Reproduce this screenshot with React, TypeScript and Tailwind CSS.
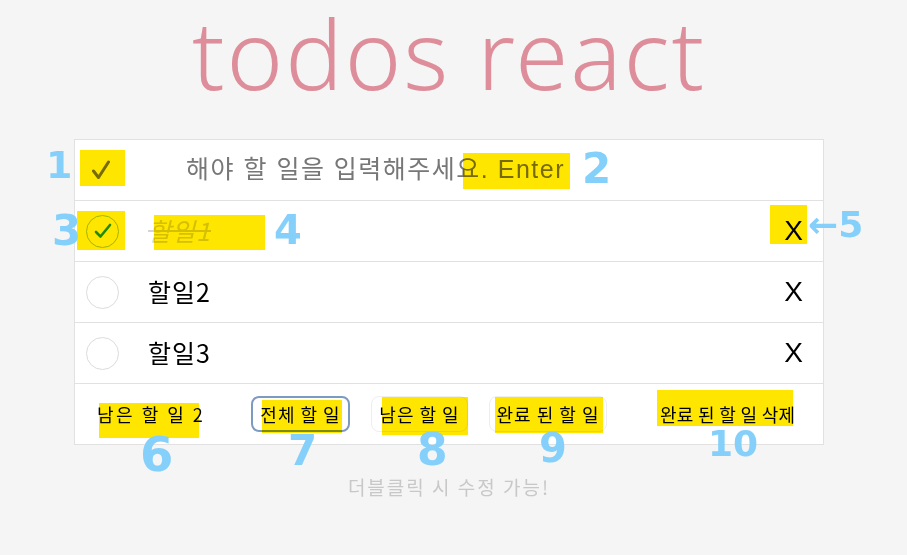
import React from 'react';

const kr = { fontFamily: '"Noto Sans CJK KR", "Liberation Sans", sans-serif' };
const krLatin = { fontFamily: '"Liberation Sans", "Noto Sans CJK KR", sans-serif' };

type Todo = { id: number; text: string; done: boolean };

const todos: Todo[] = [
  { id: 1, text: '할일1', done: true },
  { id: 2, text: '할일2', done: false },
  { id: 3, text: '할일3', done: false },
];

const TodoRow: React.FC<{ todo: Todo }> = ({ todo }) => (
  <li className="flex h-[61px] items-center border-t border-[#e1e1e1] pl-[11px] pr-[20px]">
    <span
      className={`flex h-[33px] w-[33px] items-center justify-center rounded-full border ${
        todo.done ? 'border-[#9fc9c1]' : 'border-[#dcdcdc]'
      }`}
    >
      {todo.done && (
        <svg width="18" height="16" viewBox="0 0 18 16">
          <path d="M2 9 L6.5 13.5 L16 2" fill="none" stroke="#1f9a3a" strokeWidth="2.6" strokeLinecap="round" strokeLinejoin="round" />
        </svg>
      )}
    </span>
    <span
      className={`ml-[29px] flex-1 text-[25px] tracking-[1px] ${todo.done ? 'text-[#d4d4d4] line-through italic' : 'text-black'}`}
      style={kr}
    >
      {todo.text}
    </span>
    <button className="text-[28px] leading-none text-black" style={{ fontFamily: '"Liberation Sans", sans-serif' }}>
      X
    </button>
  </li>
);

const Hl: React.FC<{ c: string }> = ({ c }) => (
  <div className={`pointer-events-none absolute bg-[#ffe600] mix-blend-multiply ${c}`} />
);

const Num: React.FC<{ c: string; t: string }> = ({ c, t }) => (
  <div
    className={`pointer-events-none absolute font-bold leading-none text-[#84d0fb] ${c}`}
    style={{ fontFamily: '"DejaVu Sans", sans-serif' }}
  >
    {t}
  </div>
);

export default function App() {
  return (
    <div className="relative min-h-[555px] w-[907px] overflow-hidden bg-[#f5f5f5]">
      <div className="flex w-[898px] flex-col items-center">
        <h1
          className="h-[139px] text-[96px] font-[350] leading-[106px] tracking-[2px] text-[#dd8e9a]"
          style={{ fontFamily: '"Noto Sans", "Open Sans", sans-serif' }}
        >
          todos react
        </h1>
        <section className="w-[750px] border border-[#e1e1e1] bg-white">
          <div className="flex h-[60px] items-center">
            <span className="flex w-[60px] pl-[17px]">
              <svg width="18" height="20" viewBox="0 0 18 20">
                <path d="M1.5 11 L6.5 17.5 L16.5 2" fill="none" stroke="#767676" strokeWidth="3" strokeLinecap="round" strokeLinejoin="round" />
              </svg>
            </span>
            <input
              className="ml-[51px] flex-1 bg-transparent text-[25px] tracking-[1.5px] text-black outline-none placeholder:text-[#777777]"
              style={krLatin}
              placeholder="해야 할 일을 입력해주세요. Enter"
            />
          </div>
          <ul>
            {todos.map((t) => (
              <TodoRow key={t.id} todo={t} />
            ))}
          </ul>
          <footer className="flex h-[61px] items-center border-t border-[#e1e1e1] pl-[22px] text-[18px] tracking-[1px] text-black" style={kr}>
            <span className="w-[154px] tracking-[2.5px]">남은 할 일 2</span>
            <div className="flex gap-[21px]">
              <button className="h-[36px] w-[99px] rounded-[8px] border-2 border-[#7d9ac0]">전체 할 일</button>
              <button className="h-[36px] w-[97px] rounded-[8px] border border-[#eeeeee]">남은 할 일</button>
              <button className="h-[36px] w-[118px] rounded-[8px] border border-[#eeeeee]">완료 된 할 일</button>
            </div>
            <button className="ml-[53px] h-[36px] tracking-[0.3px]">완료 된 할 일 삭제</button>
          </footer>
        </section>
        <p className="mt-[28px] text-[19px] tracking-[2px] text-[#c8c8c8]" style={kr}>
          더블클릭 시 수정 가능!
        </p>
      </div>

      <Hl c="left-[80px] top-[150px] h-[36px] w-[45px]" />
      <Hl c="left-[463px] top-[153px] h-[36px] w-[107px]" />
      <Hl c="left-[77px] top-[211px] h-[39px] w-[48px]" />
      <Hl c="left-[154px] top-[215px] h-[35px] w-[111px]" />
      <Hl c="left-[770px] top-[205px] h-[39px] w-[37px]" />
      <Hl c="left-[99px] top-[403px] h-[35px] w-[100px]" />
      <Hl c="left-[262px] top-[400px] h-[33px] w-[80px]" />
      <Hl c="left-[382px] top-[397px] h-[38px] w-[86px]" />
      <Hl c="left-[495px] top-[397px] h-[36px] w-[108px]" />
      <Hl c="left-[657px] top-[390px] h-[36px] w-[136px]" />

      <Num c="left-[46px] top-[146px] text-[38px]" t="1" />
      <Num c="left-[582px] top-[148px] text-[42px]" t="2" />
      <Num c="left-[52px] top-[210px] text-[42px]" t="3" />
      <Num c="left-[274px] top-[210px] text-[40px]" t="4" />
      <Num c="left-[808px] top-[207px] text-[36px]" t="←5" />
      <Num c="left-[140px] top-[430px] text-[48px]" t="6" />
      <Num c="left-[288px] top-[430px] text-[42px]" t="7" />
      <Num c="left-[417px] top-[428px] text-[44px]" t="8" />
      <Num c="left-[539px] top-[428px] text-[40px]" t="9" />
      <Num c="left-[708px] top-[426px] text-[36px]" t="10" />
    </div>
  );
}
